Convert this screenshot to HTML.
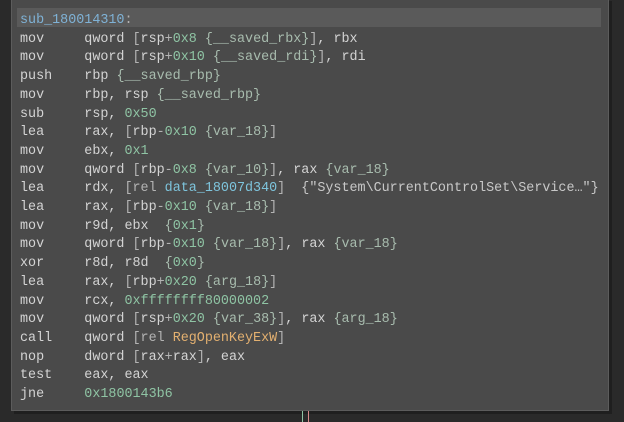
<!DOCTYPE html>
<html><head><style>
html,body{margin:0;padding:0;width:624px;height:422px;background:#2a2a2a;overflow:hidden;position:relative}
.box{position:absolute;left:11px;top:-2px;width:596px;height:412px;background:#4a4a4a;border:1px solid #5c5c5c;border-top:none;box-shadow:3px 3px 0 #1f1f1f}
.hdr{position:absolute;left:17px;top:8px;width:584px;height:19px;background:#5a5a5a}
.code{position:absolute;left:20px;top:12px;font-family:"Liberation Mono",monospace;font-size:13.4px;line-height:18.7px;white-space:pre;color:#d4d4d4}
.l{color:#7fb2d6}.g{color:#b4b4b4}.n{color:#8fc4a4}.v{color:#a8bcae}.d{color:#7ec4dc}.f{color:#e3b070}.s{color:#c8c8c8}
.ln1{position:absolute;left:302px;top:411px;width:1px;height:11px;background:#8fc4a4}
.ln2{position:absolute;left:308px;top:411px;width:1px;height:11px;background:#d88a8a}
</style></head><body>
<div class="box"></div>
<div class="hdr"></div>
<div class="ln1"></div><div class="ln2"></div>
<div class="code"><span class="l">sub_180014310</span><span class="g">:</span>
mov     qword <span class="g">[</span>rsp<span class="g">+</span><span class="n">0x8</span> <span class="v">{__saved_rbx}</span><span class="g">]</span>, rbx
mov     qword <span class="g">[</span>rsp<span class="g">+</span><span class="n">0x10</span> <span class="v">{__saved_rdi}</span><span class="g">]</span>, rdi
push    rbp <span class="v">{__saved_rbp}</span>
mov     rbp, rsp <span class="v">{__saved_rbp}</span>
sub     rsp, <span class="n">0x50</span>
lea     rax, <span class="g">[</span>rbp<span class="g">-</span><span class="n">0x10</span> <span class="v">{var_18}</span><span class="g">]</span>
mov     ebx, <span class="n">0x1</span>
mov     qword <span class="g">[</span>rbp<span class="g">-</span><span class="n">0x8</span> <span class="v">{var_10}</span><span class="g">]</span>, rax <span class="v">{var_18}</span>
lea     rdx, <span class="g">[rel </span><span class="d">data_18007d340</span><span class="g">]</span>  <span class="s">{"System\CurrentControlSet\Service…"}</span>
lea     rax, <span class="g">[</span>rbp<span class="g">-</span><span class="n">0x10</span> <span class="v">{var_18}</span><span class="g">]</span>
mov     r9d, ebx  <span class="v">{</span><span class="n">0x1</span><span class="v">}</span>
mov     qword <span class="g">[</span>rbp<span class="g">-</span><span class="n">0x10</span> <span class="v">{var_18}</span><span class="g">]</span>, rax <span class="v">{var_18}</span>
xor     r8d, r8d  <span class="v">{</span><span class="n">0x0</span><span class="v">}</span>
lea     rax, <span class="g">[</span>rbp<span class="g">+</span><span class="n">0x20</span> <span class="v">{arg_18}</span><span class="g">]</span>
mov     rcx, <span class="n">0xffffffff80000002</span>
mov     qword <span class="g">[</span>rsp<span class="g">+</span><span class="n">0x20</span> <span class="v">{var_38}</span><span class="g">]</span>, rax <span class="v">{arg_18}</span>
call    qword <span class="g">[rel </span><span class="f">RegOpenKeyExW</span><span class="g">]</span>
nop     dword <span class="g">[</span>rax<span class="g">+</span>rax<span class="g">]</span>, eax
test    eax, eax
jne     <span class="n">0x1800143b6</span></div>
</body></html>
